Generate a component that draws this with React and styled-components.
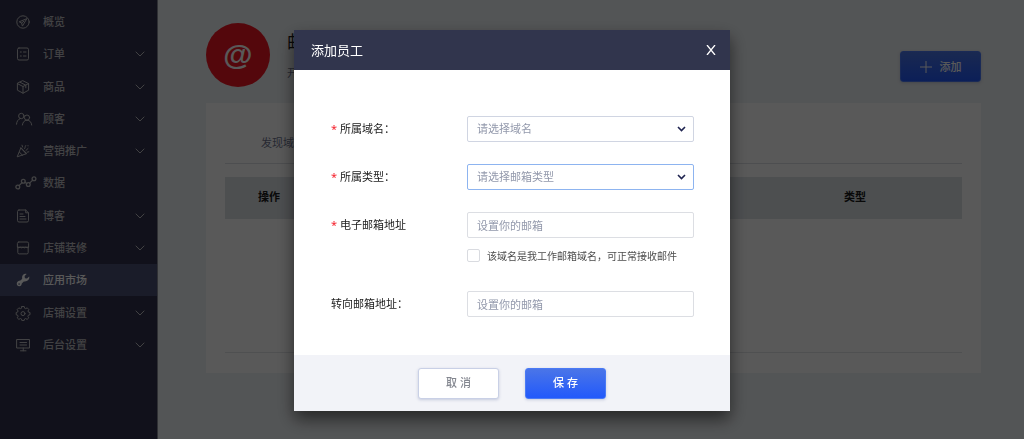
import React, { useState } from "react";
import styled, { createGlobalStyle } from "styled-components";

const GlobalStyle = createGlobalStyle`
  * {
    box-sizing: border-box;
  }

  body {
    margin: 0;
    background: #eef2f5;
    font-family: "Noto Sans", "Noto Sans CJK SC", sans-serif;
    font-size: 11px;
    line-height: 16px;
    color: #1a1a1a;
  }

  button,
  input,
  select {
    font: inherit;
  }
`;

const Page = styled.div`
  display: flex;
  min-height: 100vh;
  border-bottom: 1px solid #e8c4cb;
`;

const Sidebar = styled.nav`
  flex: none;
  width: 158px;
  padding-top: 6px;
  background: #33334d;
  border-right: 1px solid #8a8c98;
`;

const Menu = styled.ul`
  display: grid;
  grid-auto-rows: 1fr;
  min-height: 355px;
  margin: 0;
  padding: 0;
  list-style: none;
`;

const MenuLink = styled.a`
  display: flex;
  align-items: center;
  height: 100%;
  padding: 0 12px 0 15px;
  font-weight: 500;
  text-decoration: none;
  color: ${(props) => (props.$active ? "#ffffff" : "#bebec2")};
  background: ${(props) => (props.$active ? "#4b5276" : "transparent")};

  .label {
    flex: 1;
  }
`;

const MenuIcon = styled.svg`
  flex: none;
  width: 22px;
  height: 16px;
  margin-right: 6px;
  fill: none;
  stroke: currentColor;
  stroke-linecap: round;
  stroke-linejoin: round;
`;

const Chevron = styled.svg`
  width: 10px;
  height: 6px;
  fill: none;
  stroke: currentColor;
  stroke-linecap: round;
  stroke-linejoin: round;
`;

const Main = styled.main`
  flex: 1;
  min-width: 0;
  padding: 23px 43px 66px 48px;
`;

const AppHeader = styled.header`
  display: flex;
  align-items: flex-end;
  margin-bottom: 16px;
`;

const AppLogo = styled.div`
  display: flex;
  align-items: center;
  justify-content: center;
  width: 64px;
  height: 64px;
  border-radius: 50%;
  background: #f01623;
  color: #ffffff;
  font-family: "Liberation Sans", sans-serif;
  font-size: 30px;
  line-height: 30px;
  font-weight: 700;
`;

const AppInfo = styled.div`
  flex: 1;
  margin-left: 17px;
  padding-bottom: 6px;

  h1 {
    margin: 0 0 11px;
    font-size: 18px;
    line-height: 24px;
    font-weight: 400;
  }

  p {
    margin: 0;
    color: #6f7590;
  }
`;

const HeaderActions = styled.div`
  padding-bottom: 5px;
`;

const Button = styled.button`
  display: flex;
  align-items: center;
  justify-content: center;
  gap: 8px;
  width: 81px;
  height: 31px;
  padding: 0;
  border-radius: 3px;
  font-weight: 500;
  cursor: pointer;
  border: 1px solid ${(props) => (props.$primary ? "#4a7af5" : "#c9d0e6")};
  color: ${(props) => (props.$primary ? "#ffffff" : "#83868f")};
  background: ${(props) =>
    props.$primary ? "linear-gradient(#4a75e8, #2259fb)" : "#ffffff"};
  box-shadow: 0 1px 3px rgba(60, 80, 140, 0.25);
`;

const Panel = styled.section`
  padding: 0 19px 20px;
  background: #ffffff;
`;

const Tabs = styled.div`
  display: flex;
  align-items: center;
  height: 61px;
  padding: 20px 36px 0;
  border-bottom: 1px solid #dcdfe4;
  margin-bottom: 13px;

  a {
    color: #6f7590;
    text-decoration: none;
  }
`;

const Table = styled.table`
  width: 100%;
  border-collapse: collapse;
  border-bottom: 1px solid #e2e4e8;
  table-layout: fixed;

  th {
    height: 42px;
    padding: 0 0 2px;
    background: #dce1e6;
    font-weight: 700;
  }

  td {
    height: 133px;
    padding: 0;
  }

  .action {
    width: 88px;
  }

  .type {
    width: 214px;
  }
`;

const Overlay = styled.div`
  position: fixed;
  inset: 0;
  display: flex;
  align-items: flex-start;
  justify-content: center;
  padding-top: 30px;
  background: rgba(0, 0, 0, 0.65);
`;

const Modal = styled.form`
  width: 436px;
  background: #ffffff;
  box-shadow: 0 8px 16px rgba(0, 0, 0, 0.55);
`;

const ModalHeader = styled.header`
  display: flex;
  align-items: center;
  justify-content: space-between;
  height: 40px;
  padding: 0 14px 0 17px;
  background: #31354d;
  color: #ffffff;

  h2 {
    margin: 0;
    font-size: 13px;
    line-height: 20px;
    font-weight: 400;
  }
`;

const CloseButton = styled.button`
  display: flex;
  padding: 0;
  border: 0;
  background: none;
  color: #ffffff;
  cursor: pointer;

  svg {
    width: 10px;
    height: 10px;
    fill: none;
    stroke: currentColor;
    stroke-width: 1.3;
  }
`;

const ModalBody = styled.div`
  display: flex;
  flex-direction: column;
  gap: 22px;
  padding: 46px 36px 38px 37px;
`;

const Field = styled.div`
  display: grid;
  grid-template-columns: 136px 1fr;
  align-items: start;
`;

const Label = styled.label`
  display: flex;
  gap: 3px;
  line-height: 26px;

  .required {
    color: #f5222d;
  }
`;

const Control = styled.div`
  position: relative;

  svg {
    position: absolute;
    top: 10px;
    right: 8px;
    width: 9px;
    height: 6px;
    fill: none;
    stroke: #1f2450;
    stroke-width: 1.6;
    pointer-events: none;
  }
`;

const Select = styled.select`
  display: block;
  width: 100%;
  height: 26px;
  padding: 0 24px 0 9px;
  border: 1px solid ${(props) => (props.$focused ? "#8db4f0" : "#d0d5e2")};
  border-radius: 2px;
  background: #ffffff;
  color: #9298ab;
  appearance: none;
  outline: none;
`;

const Input = styled.input`
  display: block;
  width: 100%;
  height: 26px;
  padding: 0 9px;
  border: 1px solid #dcdee3;
  border-radius: 2px;
  outline: none;

  &::placeholder {
    color: #9298ab;
    opacity: 1;
  }
`;

const Hint = styled.label`
  display: flex;
  align-items: center;
  gap: 7px;
  height: 13px;
  margin: 11px 0 7px;
  font-size: 10px;
  white-space: nowrap;
  color: #4d4d4d;

  input {
    flex: none;
    width: 13px;
    height: 13px;
    margin: 0;
    border: 1px solid #d9dbe0;
    border-radius: 2px;
    background: #ffffff;
    appearance: none;
  }

  input:checked {
    background: #2f62f3;
  }
`;

const ModalFooter = styled.footer`
  display: flex;
  align-items: center;
  justify-content: center;
  gap: 26px;
  height: 56px;
  background: #f2f3f8;
`;

const icons = {
  overview: (
    <>
      <circle cx="8" cy="8" r="6.2" />
      <path d="M11.5 4.8 4.2 7.8l2.4 1.2.7 2.7zM6.6 9l2.3-1.8" />
    </>
  ),
  order: (
    <>
      <rect x="2.5" y="2" width="11" height="12" rx="1.5" />
      <path d="M5.3 6h1M8.5 6H11M5.3 10h1M8.5 10H11" />
    </>
  ),
  product: (
    <path d="M8 1.8 13.6 4.6v6.6L8 14.2l-5.6-3V4.6zM2.4 4.6 8 7.5l5.6-2.9M8 7.5v6.7M5.1 3.3l5.7 2.9v2.6" />
  ),
  customer: (
    <>
      <circle cx="6.3" cy="5" r="2.7" />
      <circle cx="12" cy="6.6" r="2.6" />
      <path d="M1.5 13.2c.2-2.8 1.6-4.8 3.5-5.6M7.4 14c.3-2.7 1.9-4.8 4.6-4.8s4.5 2 4.7 4.8" />
    </>
  ),
  marketing: (
    <path d="m5.8 5-3.600 8.800 9-3zM5.800 5l5.400 5.800M4.300 9l3.300 3.300M7.600 4 7 2.200M9.500 5.800c1.200-1 .1-2 1.200-3.300M10.800 7.600l2.200-2.100M12 9.200l1.800-.4M13 2.600v.3" />
  ),
  data: (
    <g strokeWidth="1.3">
      <circle cx="2.8" cy="12" r="1.9" />
      <circle cx="8.3" cy="6.2" r="1.9" />
      <circle cx="13.3" cy="9.5" r="1.9" />
      <circle cx="19" cy="3.8" r="1.9" />
      <path d="m4.1 10.6 2.9-3M9.9 7.2l1.9 1.3M14.6 8.1l3.1-3" />
    </g>
  ),
  blog: (
    <>
      <path d="M4 2h6.700L13.500 4.800V12.500a1.500 1.500 0 0 1-1.500 1.500H4a1.500 1.500 0 0 1-1.500-1.500V3.500A1.500 1.500 0 0 1 4 2zM10.700 2v2.800h2.800" />
      <path d="M5 6h3M5 8.500h5M5 11h6" />
    </>
  ),
  store: (
    <>
      <path d="M3.800 2h8.400a1.500 1.500 0 0 1 1.400 1.500V7.200H2.400V3.500A1.500 1.500 0 0 1 3.800 2zM2.800 7.500v5a1.400 1.400 0 0 0 1.400 1.400h7.600a1.400 1.400 0 0 0 1.400-1.400v-5" />
      <path d="M2.400 7.200q1.400 1.200 2.800 0 1.400 1.200 2.800 0 1.400 1.200 2.800 0 1.400 1.200 2.800 0" />
    </>
  ),
  market: (
    <path
      d="M14.200 4.600 12 6.600 9.900 6.200 9.600 4.100 11.600 1.900C9 1.200 6.800 3.100 7.100 5.700L7.200 6.700 5.800 8.300 3.600 9.100C1 10 1.200 14.200 4.200 14.300 6 14.300 6.600 12.800 6.800 11.500L8.800 9.400C12 10 14.900 7.900 14.200 4.600ZM4.100 11.300a.8.8 0 1 1 0 1.600.8.8 0 0 1 0-1.600Z"
      fill="currentColor"
      fillRule="evenodd"
      stroke="none"
    />
  ),
  settings: (
    <>
      <path d="M6.800 1.500h2.400l.4 1.700 1.100.5 1.500-.9 1.600 1.700-.8 1.500.4 1.100 1.600.4v2.200l-1.600.5-.5 1.100.9 1.500-1.700 1.600-1.500-.9-1.100.5-.4 1.600H6.900l-.4-1.600-1.100-.5-1.500.9-1.700-1.600.9-1.500-.5-1.100-1.400-.4V7.500L2.600 7.100l.5-1.100-.9-1.500 1.700-1.700 1.400.9 1.100-.5z" />
      <circle cx="8" cy="8.600" r="2" />
    </>
  ),
  admin: (
    <path d="M2 2.500h12.500v8.500H2zM8.250 11v2.800M5.500 13.800h5.500M5 5.500h6.500M5 8h6.500" />
  ),
};

const menuItems = [
  { icon: "overview", label: "概览" },
  { icon: "order", label: "订单", more: true },
  { icon: "product", label: "商品", more: true },
  { icon: "customer", label: "顾客", more: true },
  { icon: "marketing", label: "营销推广", more: true },
  { icon: "data", label: "数据" },
  { icon: "blog", label: "博客", more: true },
  { icon: "store", label: "店铺装修", more: true },
  { icon: "market", label: "应用市场", active: true },
  { icon: "settings", label: "店铺设置", more: true },
  { icon: "admin", label: "后台设置", more: true },
];

function SideMenu() {
  return (
    <Sidebar>
      <Menu>
        {menuItems.map((item) => (
          <li key={item.label}>
            <MenuLink href="#" $active={item.active}>
              <MenuIcon viewBox="0 0 22 16">{icons[item.icon]}</MenuIcon>
              <span className="label">{item.label}</span>
              {item.more && (
                <Chevron viewBox="0 0 10 6">
                  <path d="m1 1 4 4 4-4" />
                </Chevron>
              )}
            </MenuLink>
          </li>
        ))}
      </Menu>
    </Sidebar>
  );
}

function SelectField({ id, label, placeholder, focused }) {
  return (
    <Field>
      <Label htmlFor={id}>
        <span className="required">*</span>
        {label}
      </Label>
      <Control>
        <Select id={id} $focused={focused} defaultValue="">
          <option value="">{placeholder}</option>
        </Select>
        <svg viewBox="0 0 9 6">
          <path d="m1 1 3.500 3.500L8 1" />
        </svg>
      </Control>
    </Field>
  );
}

function StaffModal({ onClose }) {
  return (
    <Overlay>
      <Modal
        role="dialog"
        aria-labelledby="staff-title"
        onSubmit={(e) => e.preventDefault()}
      >
        <ModalHeader>
          <h2 id="staff-title">添加员工</h2>
          <CloseButton type="button" aria-label="关闭" onClick={onClose}>
            <svg viewBox="0 0 10 10">
              <path d="m1 0 8 10M9 0 1 10" />
            </svg>
          </CloseButton>
        </ModalHeader>
        <ModalBody>
          <SelectField
            id="domain"
            label="所属域名："
            placeholder="请选择域名"
          />
          <SelectField
            id="type"
            label="所属类型："
            placeholder="请选择邮箱类型"
            focused
          />
          <Field>
            <Label htmlFor="email">
              <span className="required">*</span>
              电子邮箱地址
            </Label>
            <div>
              <Input id="email" type="email" placeholder="设置你的邮箱" />
              <Hint>
                <input type="checkbox" />
                该域名是我工作邮箱域名，可正常接收邮件
              </Hint>
            </div>
          </Field>
          <Field>
            <Label htmlFor="forward">转向邮箱地址：</Label>
            <Input id="forward" type="email" placeholder="设置你的邮箱" />
          </Field>
        </ModalBody>
        <ModalFooter>
          <Button type="button" onClick={onClose}>
            取 消
          </Button>
          <Button type="submit" $primary>
            保 存
          </Button>
        </ModalFooter>
      </Modal>
    </Overlay>
  );
}

function App() {
  const [open, setOpen] = useState(true);

  return (
    <>
      <GlobalStyle />
      <Page>
        <SideMenu />
        <Main>
          <AppHeader>
            <AppLogo>@</AppLogo>
            <AppInfo>
              <h1>邮</h1>
              <p>开通</p>
            </AppInfo>
            <HeaderActions>
              <Button type="button" $primary onClick={() => setOpen(true)}>
                <svg
                  width="12"
                  height="12"
                  viewBox="0 0 12 12"
                  stroke="currentColor"
                >
                  <path d="M6 0v12M0 6h12" />
                </svg>
                添加
              </Button>
            </HeaderActions>
          </AppHeader>
          <Panel>
            <Tabs>
              <a href="#">发现域名</a>
            </Tabs>
            <Table>
              <thead>
                <tr>
                  <th className="action">操作</th>
                  <th />
                  <th className="type">类型</th>
                </tr>
              </thead>
              <tbody>
                <tr>
                  <td colSpan="3" />
                </tr>
              </tbody>
            </Table>
          </Panel>
        </Main>
      </Page>
      {open && <StaffModal onClose={() => setOpen(false)} />}
    </>
  );
}

export default App;
